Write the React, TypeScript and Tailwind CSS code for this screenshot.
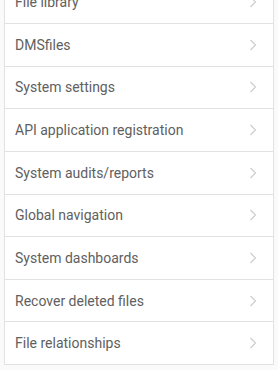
import React from "react";

const items = [
  "File library",
  "DMSfiles",
  "System settings",
  "API application registration",
  "System audits/reports",
  "Global navigation",
  "System dashboards",
  "Recover deleted files",
  "File relationships",
];

function Chevron() {
  return (
    <svg width="8" height="12" viewBox="0 0 8 12" className="shrink-0">
      <path d="M1.5 1 L6.5 6 L1.5 11" fill="none" stroke="#cccccc" strokeWidth="1.1" />
    </svg>
  );
}

export default function App() {
  return (
    <div className="w-[278px] h-[370px] overflow-hidden bg-[#fafafa]" style={{ fontFamily: "Roboto, 'Liberation Sans', sans-serif" }}>
      <div className="mx-[4px] -mt-[18.6px] bg-white border-x border-[#e2e2e2]">
        {items.map((t) => (
          <div key={t} className="h-[42.625px] flex items-center justify-between pl-[10px] pr-[16px] border-b border-[#e2e2e2]">
            <span className="text-[14px] text-[#606060] leading-none">{t}</span>
            <Chevron />
          </div>
        ))}
      </div>
    </div>
  );
}
